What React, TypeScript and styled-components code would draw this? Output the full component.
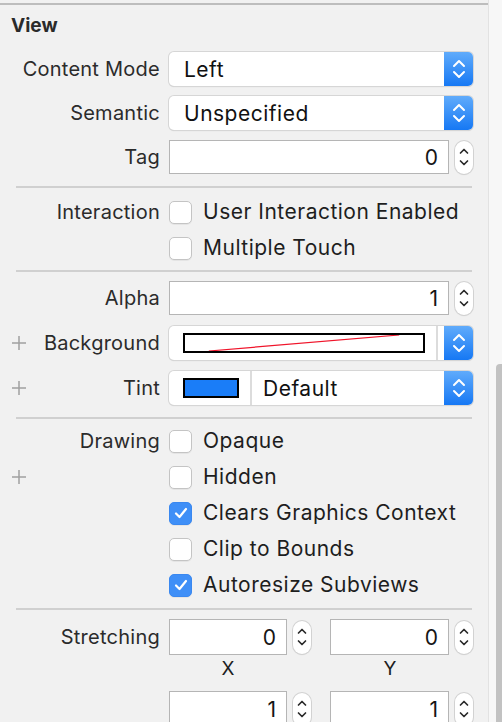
import React from 'react';
import styled, { createGlobalStyle } from 'styled-components';

const GlobalStyle = createGlobalStyle`
  html, body { margin: 0; padding: 0; background: #f1f1f1; }
  body { font-family: Inter, "Noto Sans", "Liberation Sans", sans-serif; color: #262626; }
`;

const Page = styled.div`
  display: flex;
  width: 502px;
  height: 722px;
  overflow: hidden;
`;

const Panel = styled.div`
  width: 488px;
  flex: none;
  background: #f1f1f1;
  padding-top: 3px;
  box-sizing: border-box;
`;

const TopRule = styled.div`
  height: 2px;
  background: #bdbdbd;
`;

const Title = styled.div`
  font-weight: 700;
  font-size: 19px;
  padding: 9px 0 0 11px;
  height: 37px;
  box-sizing: border-box;
  color: #2a2a2a;
`;

const Section = styled.div<{ $top: number; $bottom: number; $gap?: number }>`
  display: flex;
  flex-direction: column;
  gap: ${p => p.$gap ?? 0}px;
  padding: ${p => p.$top}px 15px ${p => p.$bottom}px 0;
`;

const Divider = styled.div`
  height: 2px;
  background: #d0d0d0;
  margin: 0 16px 0 16px;
`;

const Row = styled.div<{ $h: number }>`
  display: flex;
  align-items: center;
  height: ${p => p.$h}px;
`;

const Plus = styled.div`
  width: 30px;
  flex: none;
  display: flex;
  padding-left: 12px;
  box-sizing: border-box;
`;

const Label = styled.div`
  width: 130px;
  flex: none;
  display: flex;
  justify-content: flex-end;
  font-size: 20px;
  letter-spacing: 0.25px;
  color: #2b2b2b;
  margin-right: 9px;
  white-space: nowrap;
`;

const Control = styled.div`
  flex: 1;
  display: flex;
  align-items: center;
  height: 100%;
  gap: 6px;
`;

const Popup = styled.div`
  flex: 1;
  height: 100%;
  display: flex;
  background: #fff;
  border-radius: 5px;
  box-shadow: 0 0 0 1px #d6d6d6, 0 1px 1px rgba(0, 0, 0, 0.18);
  overflow: hidden;
`;

const PopupValue = styled.div<{ $pad?: number }>`
  flex: 1;
  display: flex;
  align-items: center;
  padding-left: ${p => p.$pad ?? 15}px;
  font-size: 21px;
  letter-spacing: 0.5px;
  color: #111;
`;

const Well = styled.div<{ $w?: number; $end?: number }>`
  display: flex;
  align-items: center;
  padding: 0 11px 0 14px;
  margin-right: ${p => p.$end ?? 0}px;
  box-sizing: border-box;
  border-right: 2px solid #dcdcdc;
  ${p => (p.$w ? `width: ${p.$w}px; flex: none;` : 'flex: 1;')}
`;

const Swatch = styled.div<{ $color: string }>`
  flex: 1;
  height: 16px;
  border: 2px solid #000;
  background: ${p => p.$color};
  svg { display: block; width: 100%; height: 100%; }
`;

const BlueArrows = styled.div`
  width: 29px;
  flex: none;
  display: flex;
  align-items: center;
  justify-content: center;
  background: linear-gradient(#60abfb, #1678f4);
`;

const Field = styled.div<{ $w?: number }>`
  ${p => (p.$w ? `width: ${p.$w}px; flex: none;` : 'flex: 1;')}
  height: 100%;
  box-sizing: border-box;
  background: #fff;
  border: 1px solid #b5b5b5;
  display: flex;
  align-items: center;
  justify-content: flex-end;
  padding-right: 10px;
  font-size: 21px;
  color: #151515;
`;

const Stepper = styled.div`
  width: 18px;
  height: 33px;
  flex: none;
  border-radius: 9px;
  background: #fff;
  box-shadow: 0 0 0 1px #d2d2d2, 0 1px 1px rgba(0, 0, 0, 0.15);
  display: flex;
  align-items: center;
  justify-content: center;
`;

const Box = styled.div<{ $on?: boolean }>`
  width: 23px;
  height: 23px;
  flex: none;
  box-sizing: border-box;
  border-radius: 5px;
  background: ${p => (p.$on ? '#3f8ff7' : '#fff')};
  border: 1px solid ${p => (p.$on ? '#3a88f0' : '#c4c4c4')};
  box-shadow: 0 1px 0 rgba(0, 0, 0, 0.05);
  display: flex;
  align-items: center;
  justify-content: center;
`;

const CheckText = styled.div`
  font-size: 21px;
  letter-spacing: 0.5px;
  color: #1e1e1e;
  margin-left: 5px;
  margin-top: -2px;
  white-space: nowrap;
`;

const Pair = styled.div<{ $grow?: boolean }>`
  display: flex;
  align-items: center;
  gap: 6px;
  height: 100%;
  ${p => (p.$grow ? 'flex: 1; margin-left: 13px;' : '')}
`;

const Axis = styled.div<{ $w: number }>`
  width: ${p => p.$w}px;
  text-align: center;
  font-size: 19px;
  color: #1e1e1e;
`;

const AxisRow = styled.div`
  display: flex;
  gap: 43px;
  padding-left: 169px;
  height: 26px;
  align-items: center;
`;

const Side = styled.div`
  width: 14px;
  flex: none;
  background: #f7f7f7;
  border-left: 1px solid #e2e2e2;
  box-sizing: border-box;
  display: flex;
  justify-content: flex-end;
  padding-top: 364px;
`;

const Thumb = styled.div`
  width: 6px;
  height: 380px;
  background: #c2c2c2;
  border-radius: 4px 0 0 0;
`;

const BlueChevrons = () => (
  <svg width="14" height="22" viewBox="0 0 14 22" fill="none" stroke="#fff" strokeWidth="2" strokeLinecap="round" strokeLinejoin="round">
    <path d="M2 8 L7 3 L12 8" />
    <path d="M2 14 L7 19 L12 14" />
  </svg>
);

const StepChevrons = () => (
  <svg width="10" height="22" viewBox="0 0 10 22" fill="none" stroke="#2a2a2a" strokeWidth="1.7" strokeLinecap="round" strokeLinejoin="round">
    <path d="M1.5 7 L5 3.5 L8.5 7" />
    <path d="M1.5 15 L5 18.5 L8.5 15" />
  </svg>
);

const Tick = () => (
  <svg width="14" height="12" viewBox="0 0 14 12" fill="none" stroke="#fff" strokeWidth="2.2" strokeLinecap="round" strokeLinejoin="round">
    <path d="M2 6.5 L5.5 10 L12 2" />
  </svg>
);

const PlusIcon = () => (
  <svg width="14" height="14" viewBox="0 0 14 14" stroke="#a0a0a0" strokeWidth="1.5">
    <path d="M7 0 V14 M0 7 H14" />
  </svg>
);

const PopupRow = ({ label, value }: { label: string; value: string }) => (
  <Row $h={34}>
    <Plus />
    <Label>{label}</Label>
    <Control>
      <Popup>
        <PopupValue>{value}</PopupValue>
        <BlueArrows><BlueChevrons /></BlueArrows>
      </Popup>
    </Control>
  </Row>
);

const FieldRow = ({ label, value }: { label: string; value: string }) => (
  <Row $h={34}>
    <Plus />
    <Label>{label}</Label>
    <Control>
      <Field>{value}</Field>
      <Stepper><StepChevrons /></Stepper>
    </Control>
  </Row>
);

const CheckRow = ({ label, text, on, plus }: { label?: string; text: string; on?: boolean; plus?: boolean }) => (
  <Row $h={36}>
    <Plus>{plus && <PlusIcon />}</Plus>
    <Label>{label}</Label>
    <Control>
      <Box $on={on}>{on && <Tick />}</Box>
      <CheckText>{text}</CheckText>
    </Control>
  </Row>
);

const NumberPair = ({ label, a, b }: { label?: string; a: string; b: string }) => (
  <Row $h={36}>
    <Plus />
    <Label>{label}</Label>
    <Control>
      <Pair>
        <Field $w={118}>{a}</Field>
        <Stepper><StepChevrons /></Stepper>
      </Pair>
      <Pair $grow>
        <Field>{b}</Field>
        <Stepper><StepChevrons /></Stepper>
      </Pair>
    </Control>
  </Row>
);

export default function App() {
  return (
    <Page>
      <GlobalStyle />
      <Panel>
        <TopRule />
        <Title>View</Title>
        <Section $top={10} $bottom={12} $gap={10}>
          <PopupRow label="Content Mode" value="Left" />
          <PopupRow label="Semantic" value="Unspecified" />
          <FieldRow label="Tag" value="0" />
        </Section>
        <Divider />
        <Section $top={6} $bottom={4}>
          <CheckRow label="Interaction" text="User Interaction Enabled" />
          <CheckRow text="Multiple Touch" />
        </Section>
        <Divider />
        <Section $top={9} $bottom={12} $gap={11}>
          <FieldRow label="Alpha" value="1" />
          <Row $h={34}>
            <Plus><PlusIcon /></Plus>
            <Label>Background</Label>
            <Control>
              <Popup>
                <Well $end={6}>
                  <Swatch $color="#fff">
                    <svg viewBox="0 0 100 10" preserveAspectRatio="none">
                      <line x1="10" y1="10" x2="90" y2="0" stroke="#f0142a" strokeWidth="1.2" vectorEffect="non-scaling-stroke" />
                    </svg>
                  </Swatch>
                </Well>
                <BlueArrows><BlueChevrons /></BlueArrows>
              </Popup>
            </Control>
          </Row>
          <Row $h={34}>
            <Plus><PlusIcon /></Plus>
            <Label>Tint</Label>
            <Control>
              <Popup>
                <Well $w={83}>
                  <Swatch $color="#1a7df8" />
                </Well>
                <PopupValue $pad={11}>Default</PopupValue>
                <BlueArrows><BlueChevrons /></BlueArrows>
              </Popup>
            </Control>
          </Row>
        </Section>
        <Divider />
        <Section $top={4} $bottom={5}>
          <CheckRow label="Drawing" text="Opaque" />
          <CheckRow text="Hidden" plus />
          <CheckRow text="Clears Graphics Context" on />
          <CheckRow text="Clip to Bounds" />
          <CheckRow text="Autoresize Subviews" on />
        </Section>
        <Divider />
        <Section $top={9} $bottom={0}>
          <NumberPair label="Stretching" a="0" b="0" />
        </Section>
        <AxisRow>
          <Axis $w={118}>X</Axis>
          <Axis $w={120}>Y</Axis>
        </AxisRow>
        <Section $top={10} $bottom={0}>
          <NumberPair a="1" b="1" />
        </Section>
      </Panel>
      <Side>
        <Thumb />
      </Side>
    </Page>
  );
}
